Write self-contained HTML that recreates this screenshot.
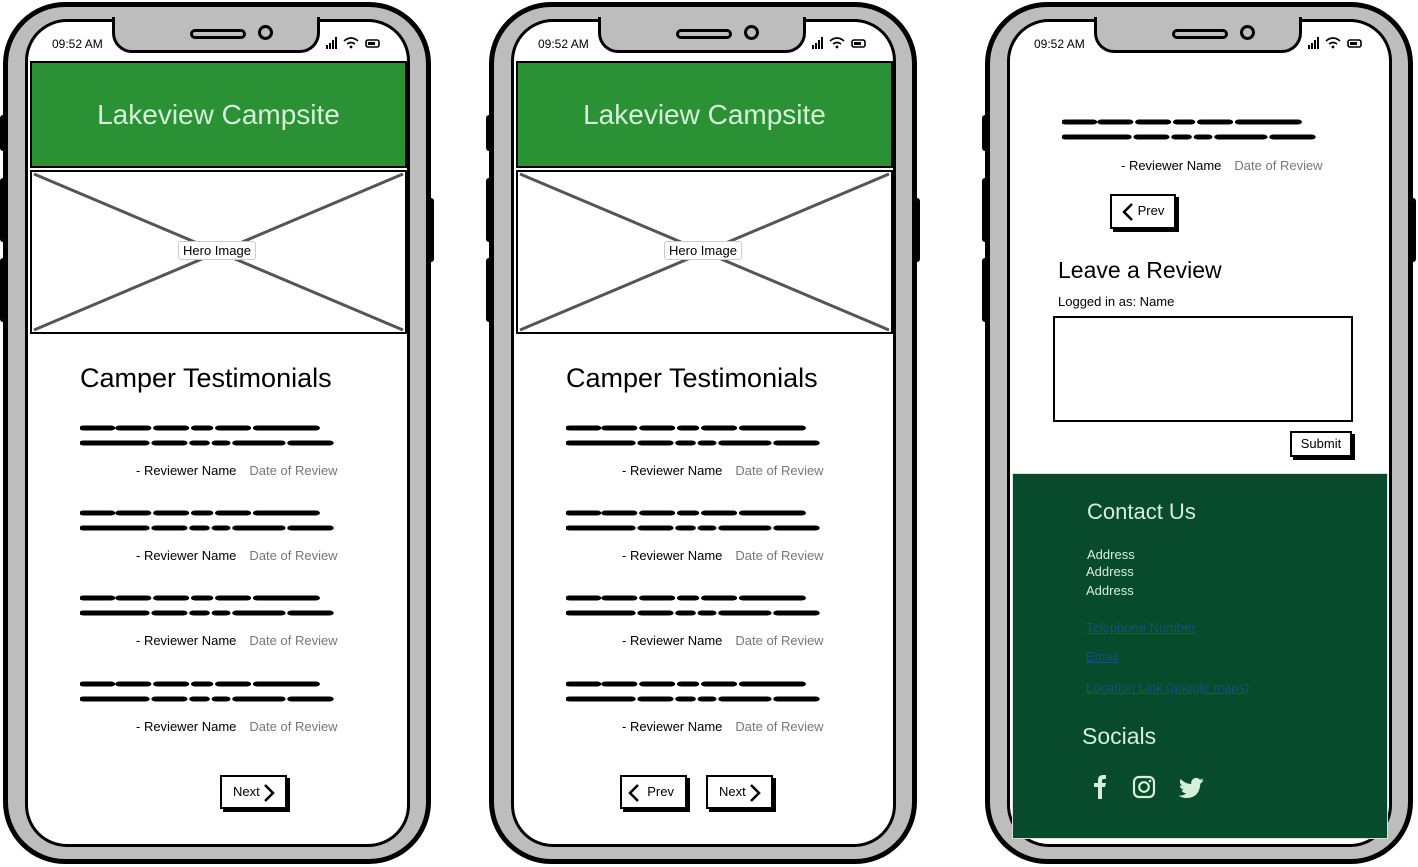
<!DOCTYPE html>
<html><head><meta charset="utf-8"><style>
*{margin:0;padding:0;box-sizing:border-box}
body{width:1418px;height:867px;background:#fff;position:relative;overflow:hidden;font-family:"Liberation Sans",sans-serif;color:#000}
.ph{position:absolute;top:0;width:432px;height:867px}
.ph>*{position:absolute}
.outer{left:3px;top:2px;width:428px;height:862px;border:5px solid #000;border-radius:62px;background:#bdbdbd}
.screen{left:25px;top:19px;width:385px;height:828px;border:3px solid #000;border-radius:42px;background:#fff;overflow:hidden}
.notch{left:112px;top:17px;width:208px;height:36px;background:#bdbdbd;border:3px solid #000;border-top:none;border-radius:0 0 20px 20px}
.spk{left:190px;top:29px;width:56px;height:10px;border:3px solid #000;border-radius:6px;background:#bdbdbd}
.cam{left:258px;top:25px;width:15px;height:15px;border:3px solid #000;border-radius:50%;background:#bdbdbd}
.btnL{left:0;width:6px;background:#000;border-radius:3px 0 0 3px}
.btnR{left:428px;width:6px;background:#000;border-radius:0 3px 3px 0}
.time{left:52px;top:37px;font-size:12px}
.hdr{left:30px;top:61px;width:377px;height:107px;background:#2a9135;border:2px solid #000;color:#d5efd9;font-size:28px;text-align:center;line-height:103px}
.hero{left:30px;top:170px;width:377px;height:164px;border:2px solid #000;background:#fff}
.hlab{left:178px;top:241px;font-size:13px;background:#fff;border:1px solid #ccc;border-radius:3px;padding:1px 4px}
.h1{left:80px;top:363px;font-size:27px}
.rv{font-size:13px}
.rv b{font-weight:normal}
.rv span{color:#777;margin-left:13px}
.btn{height:34px;border:2px solid #000;background:#fff;box-shadow:3px 3px 0 #000;font-size:13px;line-height:30px}
.ft{color:#d5efd9}
.lk{color:#1a4f7a;text-decoration:underline;font-size:13px}
</style></head><body>

<svg width="0" height="0" style="position:absolute"><defs>
<g id="scr" fill="none" stroke="#000" stroke-width="5" stroke-linecap="round" transform="scale(1.72,1)">
<path d="M2 4h16M23 4h16M45 4h16M67 4h8M81 4h16M103 4h34"/>
<path d="M2 19h36M44 19h16M66 19h7M79 19h6M91 19h26M123 19h22"/>
</g>
<g id="sig"><rect x="0" y="8" width="2" height="4" fill="#000"/><rect x="3" y="6" width="2" height="6" fill="#000"/><rect x="6" y="3" width="2" height="9" fill="#000"/><rect x="9" y="0" width="2" height="12" fill="#000"/>
<path d="M18 4q7-6 14 0M21 7q4-3 8 0" stroke="#000" stroke-width="1.6" fill="none"/><circle cx="25" cy="10" r="1.4"/>
<rect x="40" y="3" width="13" height="7" rx="2" fill="none" stroke="#000" stroke-width="1.6"/><rect x="42" y="5" width="7" height="3" fill="#000"/></g>
</defs></svg>

<div class="ph" style="left:0">
<div class="btnL" style="top:115px;height:36px"></div><div class="btnL" style="top:178px;height:64px"></div><div class="btnL" style="top:258px;height:64px"></div><div class="btnR" style="top:198px;height:64px"></div>
<div class="outer"></div><div class="screen"></div><div class="notch"></div><div class="spk"></div><div class="cam"></div>
<div class="time">09:52 AM</div><svg width="56" height="14" style="left:326px;top:37px"><use href="#sig"/></svg>
<div class="hdr">Lakeview Campsite</div>
<div class="hero"><svg width="373" height="160"><path d="M2 2L371 158M371 2L2 158" stroke="#555" stroke-width="3"/></svg></div>
<div class="hlab">Hero Image</div>
<div class="h1">Camper Testimonials</div>
<svg style="left:80px;top:424px" width="260" height="30"><use href="#scr"/></svg><div class="rv" style="left:136px;top:463px"><b>- Reviewer Name</b><span>Date of Review</span></div>
<svg style="left:80px;top:509px" width="260" height="30"><use href="#scr"/></svg><div class="rv" style="left:136px;top:548px"><b>- Reviewer Name</b><span>Date of Review</span></div>
<svg style="left:80px;top:594px" width="260" height="30"><use href="#scr"/></svg><div class="rv" style="left:136px;top:633px"><b>- Reviewer Name</b><span>Date of Review</span></div>
<svg style="left:80px;top:680px" width="260" height="30"><use href="#scr"/></svg><div class="rv" style="left:136px;top:719px"><b>- Reviewer Name</b><span>Date of Review</span></div>
<div class="btn" style="left:220px;top:775px;width:67px;padding-left:11px">Next <svg width="12" height="20" style="vertical-align:middle"><path d="M2 2l8 8-8 8" stroke="#000" stroke-width="2.5" fill="none"/></svg></div>
</div>

<div class="ph" style="left:486px">
<div class="btnL" style="top:115px;height:36px"></div><div class="btnL" style="top:178px;height:64px"></div><div class="btnL" style="top:258px;height:64px"></div><div class="btnR" style="top:198px;height:64px"></div>
<div class="outer"></div><div class="screen"></div><div class="notch"></div><div class="spk"></div><div class="cam"></div>
<div class="time">09:52 AM</div><svg width="56" height="14" style="left:326px;top:37px"><use href="#sig"/></svg>
<div class="hdr">Lakeview Campsite</div>
<div class="hero"><svg width="373" height="160"><path d="M2 2L371 158M371 2L2 158" stroke="#555" stroke-width="3"/></svg></div>
<div class="hlab">Hero Image</div>
<div class="h1">Camper Testimonials</div>
<svg style="left:80px;top:424px" width="260" height="30"><use href="#scr"/></svg><div class="rv" style="left:136px;top:463px"><b>- Reviewer Name</b><span>Date of Review</span></div>
<svg style="left:80px;top:509px" width="260" height="30"><use href="#scr"/></svg><div class="rv" style="left:136px;top:548px"><b>- Reviewer Name</b><span>Date of Review</span></div>
<svg style="left:80px;top:594px" width="260" height="30"><use href="#scr"/></svg><div class="rv" style="left:136px;top:633px"><b>- Reviewer Name</b><span>Date of Review</span></div>
<svg style="left:80px;top:680px" width="260" height="30"><use href="#scr"/></svg><div class="rv" style="left:136px;top:719px"><b>- Reviewer Name</b><span>Date of Review</span></div>
<div class="btn" style="left:134px;top:775px;width:67px;padding-left:6px"><svg width="12" height="20" style="vertical-align:middle"><path d="M10 2l-8 8 8 8" stroke="#000" stroke-width="2.5" fill="none"/></svg> &nbsp;Prev</div>
<div class="btn" style="left:220px;top:775px;width:67px;padding-left:11px">Next <svg width="12" height="20" style="vertical-align:middle"><path d="M2 2l8 8-8 8" stroke="#000" stroke-width="2.5" fill="none"/></svg></div>
</div>

<div class="ph" style="left:982px">
<div class="btnL" style="top:115px;height:36px"></div><div class="btnL" style="top:178px;height:64px"></div><div class="btnL" style="top:258px;height:64px"></div><div class="btnR" style="top:198px;height:64px"></div>
<div class="outer"></div><div class="screen"></div><div class="notch"></div><div class="spk"></div><div class="cam"></div>
<div class="time">09:52 AM</div><svg width="56" height="14" style="left:326px;top:37px"><use href="#sig"/></svg>
<svg style="left:80px;top:118px" width="260" height="30"><use href="#scr"/></svg><div class="rv" style="left:139px;top:158px"><b>- Reviewer Name</b><span>Date of Review</span></div>
<div class="btn" style="left:128px;top:194px;width:66px;height:35px;padding-left:10px"><svg width="12" height="20" style="vertical-align:middle"><path d="M10 2l-8 8 8 8" stroke="#000" stroke-width="2.5" fill="none"/></svg> Prev</div>
<div style="left:76px;top:257px;font-size:23px">Leave a Review</div>
<div style="left:76px;top:294px;font-size:13px">Logged in as: Name</div>
<div style="left:71px;top:316px;width:300px;height:106px;border:2px solid #000"></div>
<div class="btn" style="left:308px;top:431px;width:62px;height:26px;line-height:22px;text-align:center">Submit</div>
<div style="left:30px;top:473px;width:376px;height:366px;background:#084a2c;border:1px solid #ddd"></div>
<div class="ft" style="left:105px;top:499px;font-size:22px">Contact Us</div>
<div class="ft" style="left:105px;top:547px;font-size:13px">Address</div>
<div class="ft" style="left:104px;top:564px;font-size:13px">Address</div>
<div class="ft" style="left:104px;top:583px;font-size:13px">Address</div>
<div class="lk" style="left:104px;top:620px">Telephone Number</div>
<div class="lk" style="left:104px;top:649px">Email</div>
<div class="lk" style="left:104px;top:680px">Location Link (google maps)</div>
<div class="ft" style="left:100px;top:723px;font-size:23px">Socials</div>
<svg style="left:104px;top:774px" width="130" height="26">
<path d="M12 25V13H8V9h4V6q0-5 5-5h3v4h-2q-2 0-2 2v2h4l-1 4h-3v12z" fill="#d5efd9"/>
<rect x="48" y="3" width="20" height="20" rx="5" fill="none" stroke="#d5efd9" stroke-width="2.2"/><circle cx="58" cy="13" r="4.8" fill="none" stroke="#d5efd9" stroke-width="2.2"/><circle cx="64" cy="7" r="1.3" fill="#d5efd9"/>
<path d="M118 6q-1.5 .8-3 1 1.7-1 2.2-2.7-1.6 1-3.3 1.3a5 5 0 0 0-8.6 4.5Q99 9.8 94.6 5q-2 3.8 1.6 6.7-1.3 0-2.3-.6 0 3.7 3.9 4.8-1.2.3-2.3.1 1 3 4.8 3.4-3.4 2.6-7.6 2.2Q96 24 100.5 24 113 24 114.3 10.5V9.7q1.8-1.3 3.7-3.7z" fill="#d5efd9"/>
</svg>
</div>
</body></html>
